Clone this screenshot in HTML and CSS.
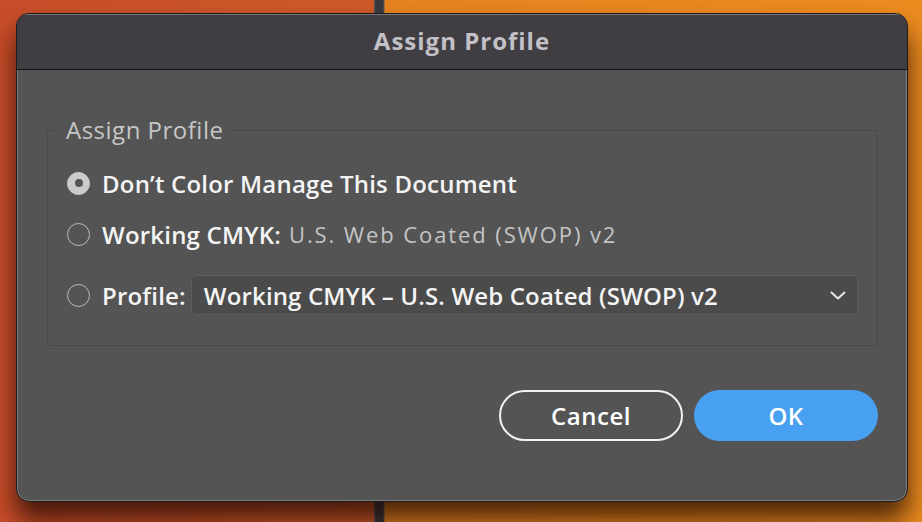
FILE: index.html
```html
<!DOCTYPE html>
<html lang="en">
<head>
<meta charset="utf-8">
<title>Assign Profile</title>
<link rel="stylesheet" href="styles.css">
</head>
<body>
<div class="desktop">
  <div class="dialog">
    <div class="titlebar">Assign Profile</div>
    <div class="content">
      <fieldset class="group">
        <legend class="legend">Assign Profile</legend>
        <div class="row row-first">
          <span class="radio radio-on"></span>
          <span class="label">Don’t Color Manage This Document</span>
        </div>
        <div class="row row-second">
          <span class="radio"></span>
          <span class="label">Working CMYK:</span>
          <span class="value">U.S. Web Coated (SWOP) v2</span>
        </div>
        <div class="row row-third">
          <span class="radio"></span>
          <span class="label">Profile:</span>
          <div class="select">
            <span class="select-text">Working CMYK – U.S. Web Coated (SWOP) v2</span>
            <svg class="chevron" width="16" height="9" viewBox="0 0 16 9"><path d="M1.5 1.5 L8 7.5 L14.5 1.5" fill="none" stroke="#e6e6e6" stroke-width="2" stroke-linecap="round" stroke-linejoin="round"/></svg>
          </div>
        </div>
      </fieldset>
      <div class="actions">
        <button class="btn btn-cancel">Cancel</button>
        <button class="btn btn-ok">OK</button>
      </div>
    </div>
  </div>
</div>
</body>
</html>
```

FILE: styles.css
```css
html, body {
  margin: 0;
  padding: 0;
}
body {
  width: 922px;
  height: 522px;
  overflow: hidden;
  font-family: "Open Sans", "Liberation Sans", sans-serif;
}
.desktop {
  width: 922px;
  height: 522px;
  padding-top: 13px;
  padding-left: 16px;
  box-sizing: border-box;
  background: linear-gradient(to right, #c84d29 0, #cf5a29 374px, #5a5a5e 374px, #3a3a3e 376px, #3a3a3e 383px, #5a5a5e 384px, #e6831f 385px, #ec8c20 100%);
}
.dialog {
  width: 892px;
  height: 489px;
  box-sizing: border-box;
  background: #545454;
  border: 1px solid #1c1c1c;
  border-radius: 13px;
  box-shadow: inset 0 0 0 1px #7c7c7c, 0 18px 26px rgba(25, 5, 0, 0.75);
  overflow: hidden;
  display: flex;
  flex-direction: column;
}
.titlebar {
  height: 56px;
  padding-bottom: 3px;
  box-sizing: border-box;
  flex: none;
  background: #403e43;
  border-bottom: 1px solid #121212;
  box-shadow: inset 0 1px 0 #77757a;
  display: flex;
  align-items: center;
  justify-content: center;
  color: #c3c1c7;
  font-size: 24px;
  font-weight: 700;
  letter-spacing: 1px;
}
.content {
  display: flex;
  flex-direction: column;
  padding: 46px 29px 0 30px;
}
.group {
  margin: 0;
  padding: 21px 19px 30px 19px;
  border: 1px solid #4a4a4a;
  border-radius: 2px;
}
.legend {
  margin-left: -7px;
  padding: 0 6px;
  font-size: 24px;
  line-height: 28px;
  letter-spacing: 0.5px;
  color: #c6c6c6;
}
.row {
  display: flex;
  align-items: center;
}
.row-first { height: 36px; }
.row-second { height: 36px; margin-top: 15px; }
.row-third { height: 40px; margin-top: 23px; }
.radio {
  width: 23px;
  height: 23px;
  box-sizing: border-box;
  border-radius: 50%;
  border: 1.5px solid #bdbdbd;
  margin-right: 12px;
  flex: none;
  display: flex;
  align-items: center;
  justify-content: center;
}
.radio-on {
  background: #cbcbcb;
  border-color: #cbcbcb;
}
.radio-on::after {
  content: "";
  width: 8px;
  height: 8px;
  border-radius: 50%;
  background: #545454;
}
.label {
  font-size: 24px;
  font-weight: 600;
  letter-spacing: 0.2px;
  color: #f4f4f4;
}
.value {
  margin-left: 8px;
  font-size: 22px;
  letter-spacing: 1.9px;
  color: #c4c4c4;
}
.select {
  margin-left: 5px;
  flex: 1;
  height: 40px;
  box-sizing: border-box;
  background: #4b4b4b;
  border: 1px solid #5e5e5e;
  border-radius: 5px;
  display: flex;
  align-items: center;
  padding: 0 10px 0 12px;
}
.select-text {
  flex: 1;
  font-size: 24px;
  font-weight: 600;
  letter-spacing: 0.15px;
  color: #f4f4f4;
}
.chevron {
  flex: none;
  margin-right: 1px;
}
.actions {
  display: flex;
  justify-content: flex-end;
  gap: 11px;
  margin-top: 44px;
}
.btn {
  width: 184px;
  height: 51px;
  box-sizing: border-box;
  border-radius: 26px;
  font-family: inherit;
  font-size: 24px;
  font-weight: 600;
  letter-spacing: 0.5px;
  color: #ffffff;
  padding: 0;
  cursor: pointer;
}
.btn-cancel {
  background: transparent;
  border: 2px solid #f2f2f2;
}
.btn-ok {
  background: #48a0f1;
  border: none;
}
```
